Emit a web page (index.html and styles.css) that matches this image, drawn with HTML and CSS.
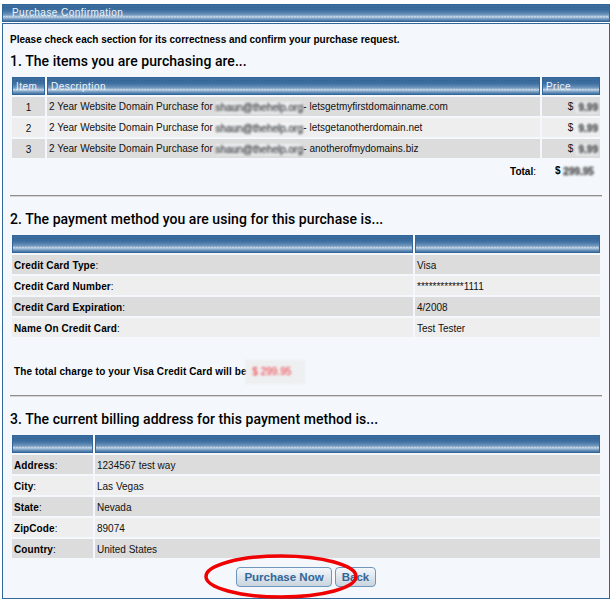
FILE: index.html
```html
<!DOCTYPE html>
<html lang="en">
  <head>
    <meta charset="UTF-8" />
    <title>Purchase Confirmation</title>
    <link rel="stylesheet" href="styles.css">
  </head>
  <body>
    <div class="title-bar">Purchase Confirmation</div>
    <div class="panel">
      <p class="intro">Please check each section for its correctness and confirm your purchase request.</p>

      <h2>1. The items you are purchasing are...</h2>
      <table class="grid items">
        <tr>
          <th class="col-item">Item</th>
          <th>Description</th>
          <th class="col-price">Price</th>
        </tr>
        <tr class="odd">
          <td class="center">1</td>
          <td>2 Year Website Domain Purchase for <span class="blur-box email">shaun@thehelp.org</span> - letsgetmyfirstdomainname.com</td>
          <td class="price">$ <span class="blur-box amount">9.99</span></td>
        </tr>
        <tr class="even">
          <td class="center">2</td>
          <td>2 Year Website Domain Purchase for <span class="blur-box email">shaun@thehelp.org</span> - letsgetanotherdomain.net</td>
          <td class="price">$ <span class="blur-box amount">9.99</span></td>
        </tr>
        <tr class="odd">
          <td class="center">3</td>
          <td>2 Year Website Domain Purchase for <span class="blur-box email">shaun@thehelp.org</span> - anotherofmydomains.biz</td>
          <td class="price">$ <span class="blur-box amount">9.99</span></td>
        </tr>
      </table>
      <div class="total"><b>Total</b>:<span class="total-value"><b>$</b> <span class="blur-box sum">299.95</span></span></div>
      <hr />

      <h2>2. The payment method you are using for this purchase is...</h2>
      <table class="grid payment">
        <tr><th class="col-pay"></th><th></th></tr>
        <tr class="odd"><td><b>Credit Card Type</b>:</td><td>Visa</td></tr>
        <tr class="even"><td><b>Credit Card Number</b>:</td><td>************1111</td></tr>
        <tr class="odd"><td><b>Credit Card Expiration</b>:</td><td>4/2008</td></tr>
        <tr class="even"><td><b>Name On Credit Card</b>:</td><td>Test Tester</td></tr>
      </table>
      <p class="charge"><b>The total charge to your Visa Credit Card will be</b> <span class="blur-box red">$ 299.95</span></p>
      <hr />

      <h2>3. The current billing address for this payment method is...</h2>
      <table class="grid billing">
        <tr><th class="col-bill"></th><th></th></tr>
        <tr class="odd"><td><b>Address</b>:</td><td>1234567 test way</td></tr>
        <tr class="even"><td><b>City</b>:</td><td>Las Vegas</td></tr>
        <tr class="odd"><td><b>State</b>:</td><td>Nevada</td></tr>
        <tr class="even"><td><b>ZipCode</b>:</td><td>89074</td></tr>
        <tr class="odd"><td><b>Country</b>:</td><td>United States</td></tr>
      </table>

      <div class="actions">
        <button type="button" class="buy">Purchase Now</button>
        <button type="button" class="back">Back</button>
        <svg class="circle" width="156" height="47" viewBox="0 0 156 47">
          <ellipse cx="78" cy="23.5" rx="75" ry="20.5" fill="none" stroke="#f00000" stroke-width="3.5" />
        </svg>
      </div>
    </div>
  </body>
</html>
```

FILE: styles.css
```css
body {
  font-family: "Liberation Sans", Arial, sans-serif;
  font-size: 10px;
  color: #111;
  background-color: #fff;
  margin: 0;
  padding: 4px 6px 0 2px;
}
.title-bar,
th {
  background:
    repeating-linear-gradient(90deg, #2f5f90 0 1px, transparent 1px 3px) 0 2px / 100% 1px no-repeat,
    repeating-linear-gradient(90deg, #c4d5e6 0 2px, transparent 2px 3px) 0 11px / 100% 1px no-repeat,
    linear-gradient(#3a6c9e 0, #3a6c9e 30%, #4f7dab 45%, #6f96bd 60%, #9ab6d2 68%, #a9c2da 78%, #7ea2c6 85%, #3f709f 100%);
}
.title-bar {
  height: 18px;
  line-height: 16px;
  padding-left: 9px;
  color: #f0f4f8;
  letter-spacing: 0.45px;
  border: 1px solid #336699;
  box-sizing: border-box;
}
.panel {
  margin-top: 1px;
  height: 576px;
  box-sizing: border-box;
  padding: 0 3px 0 7px;
  background-color: #f4f8fc;
  border: 1px solid #336699;
}
.intro {
  margin: 10px 0 0;
  height: 12px;
  line-height: 12px;
  font-weight: bold;
  color: #000;
}
h2 {
  margin: 8px 0 9px 0;
  height: 14px;
  line-height: 14px;
  font-family: Roboto, "Liberation Sans", sans-serif;
  font-size: 14px;
  font-weight: 500;
  letter-spacing: 0.05px;
  color: #000;
}
.grid {
  width: 592px;
  border-collapse: separate;
  border-spacing: 2px;
  margin-top: -2px;
  table-layout: fixed;
}
th {
  height: 18px;
  padding: 0 3px;
  box-sizing: border-box;
  border: 1px solid #336699;
  color: #f0f4f8;
  font-weight: normal;
  letter-spacing: 0.45px;
  text-align: left;
}
td {
  height: 19px;
  padding: 1px 2px 0;
  box-sizing: border-box;
  white-space: nowrap;
}
td b {
  letter-spacing: 0.1px;
  color: #000;
}
.odd td {
  background-color: #dcdcdc;
}
.even td {
  background-color: #eeeeee;
}
.center {
  text-align: center;
}
.col-item {
  width: 33px;
}
.col-price {
  width: 58px;
}
.col-pay {
  width: 401px;
}
.col-bill {
  width: 81px;
}
.price {
  text-align: right;
}
.blur-box {
  display: inline-block;
  color: #555;
  -webkit-text-stroke: 0.4px #555;
  filter: blur(1.3px);
  vertical-align: middle;
  white-space: nowrap;
}
.email {
  width: 85px;
  background-color: rgba(244, 248, 252, 0.7);
}
.amount {
  width: 22px;
  font-weight: bold;
  background-color: rgba(244, 248, 252, 0.6);
}
.sum {
  width: 38px;
  font-weight: bold;
}
.red {
  color: #f0303a;
  -webkit-text-stroke: 0;
  width: 53px;
  height: 24px;
  line-height: 24px;
  padding-left: 7px;
  margin-left: -4px;
  filter: blur(0.9px);
  background-color: rgba(236, 236, 236, 0.8);
}
.total {
  display: flex;
  justify-content: flex-end;
  height: 22px;
  margin-top: 0;
  align-items: center;
  color: #000;
}
.total-value {
  width: 51px;
  margin-left: 19px;
  white-space: nowrap;
}
hr {
  border: none;
  height: 2px;
  margin: 13px 0 0 0;
  width: 592px;
  background: linear-gradient(#8e8e8e 50%, #d6d6d6 50%);
}
.payment + .charge {
  margin: 21px 0 0 4px;
  height: 22px;
  line-height: 22px;
  color: #000;
}
.charge b {
  letter-spacing: 0.1px;
}
.charge + hr {
  margin-top: 13px;
}
hr + h2 {
  margin-top: 15px;
}
.actions {
  display: flex;
  justify-content: center;
  gap: 3px;
  margin-top: 7px;
  padding-right: 4px;
  position: relative;
}
button {
  height: 20px;
  padding: 0;
  font-family: "Liberation Sans", Arial, sans-serif;
  font-size: 11.5px;
  font-weight: bold;
  color: #336699;
  border: 1px solid #6f96bb;
  border-radius: 4px;
  background: linear-gradient(#f4f8fc, #c9d4de);
}
.buy {
  width: 96px;
}
.back {
  width: 41px;
}
.circle {
  position: absolute;
  left: 193px;
  top: -14px;
}
```
